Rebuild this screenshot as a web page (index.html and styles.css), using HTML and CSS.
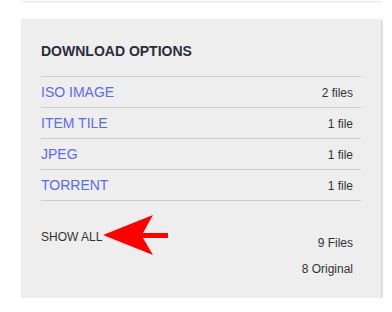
FILE: index.html
```html
<!DOCTYPE html>
<html lang="en">
<head>
    <meta charset="UTF-8">
    <title>Download Options</title>
    <link rel="stylesheet" href="styles.css">
</head>
<body>
    <div class="top-card"></div>

    <div class="panel">
        <h5 class="panel-title">DOWNLOAD OPTIONS</h5>

        <div class="format-list">
            <div class="format-row">
                <a class="format-link" href="#">ISO IMAGE</a>
                <span class="format-count">2 files</span>
            </div>
            <div class="format-row">
                <a class="format-link" href="#">ITEM TILE</a>
                <span class="format-count">1 file</span>
            </div>
            <div class="format-row">
                <a class="format-link" href="#">JPEG</a>
                <span class="format-count">1 file</span>
            </div>
            <div class="format-row">
                <a class="format-link" href="#">TORRENT</a>
                <span class="format-count">1 file</span>
            </div>
        </div>

        <div class="panel-footer">
            <a class="show-all" href="#">SHOW ALL</a>
            <div class="totals">
                <div>9 Files</div>
                <div>8 Original</div>
            </div>
        </div>

        <svg class="arrow" width="66" height="41" viewBox="0 0 66 41">
            <polygon points="0,20 50,0 40,18 65,18 65,23 40,23 50,40" fill="#ff0000"/>
        </svg>
    </div>
</body>
</html>
```

FILE: styles.css
```css
body {
    font-family: 'Liberation Sans', Arial, sans-serif;
    background-color: #fff;
    color: #333;
    margin: 0;
    padding: 0;
}
.top-card {
    height: 1px;
    margin: 0 10px 0 22px;
    background: #fff;
    box-shadow: 0 1px 2px rgba(0, 0, 0, 0.18);
}
.panel {
    position: relative;
    width: 320px;
    margin: 18px 0 0 21px;
    padding: 24px 20px 22px 20px;
    background-color: #eeeeee;
    box-shadow: 1px 1px 2px rgba(0, 0, 0, 0.25);
}
.panel-title {
    margin: 0 0 17px 0;
    font-size: 14px;
    line-height: 16px;
    font-weight: bold;
    color: #2c2c3a;
}
.format-list {
    border-top: 1px solid #cccccc;
}
.format-row {
    display: flex;
    justify-content: space-between;
    align-items: flex-start;
    height: 16px;
    padding: 7px 8px 7px 0;
    border-bottom: 1px solid #cccccc;
}
.format-link {
    font-size: 14px;
    line-height: 16px;
    color: #5b6cf0;
    text-decoration: none;
}
.format-count {
    margin-top: 3px;
    font-size: 12px;
    line-height: 13px;
    color: #333;
}
.panel-footer {
    display: flex;
    justify-content: space-between;
    align-items: flex-start;
    padding: 29px 8px 0 0;
}
.show-all {
    font-size: 12px;
    line-height: 14px;
    color: #333;
    text-decoration: none;
}
.totals {
    margin-top: 6px;
    text-align: right;
    font-size: 12px;
    line-height: 14px;
}
.totals div + div {
    margin-top: 12px;
}
.arrow {
    position: absolute;
    left: 82px;
    top: 196px;
}
```
